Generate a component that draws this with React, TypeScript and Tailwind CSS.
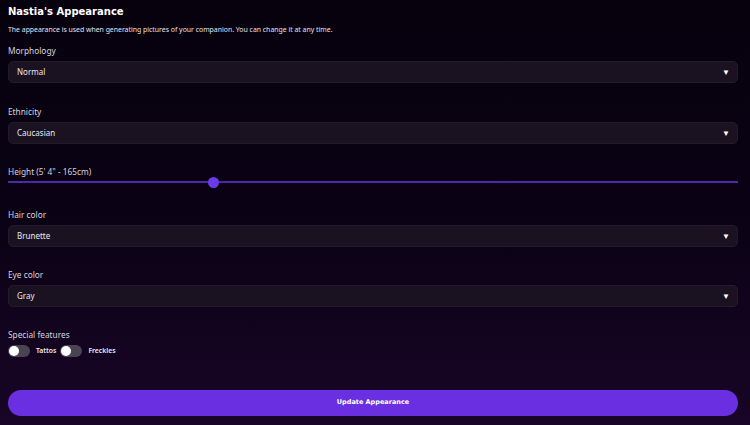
import React, { useState } from "react";

const body = { fontFamily: '"Noto Sans", "Open Sans", sans-serif' };
const display = { fontFamily: '"DejaVu Sans", Inter, sans-serif' };

function Select({ label, value }: { label: string; value: string }) {
  return (
    <div className="flex flex-col">
      <label className="text-[8.3px] text-[#d8d2de] leading-[12px] h-[12px]">{label}</label>
      <div className="mt-[4px] h-[22px] rounded-[5px] bg-[#1a1220] border border-[#241a2c] flex items-center justify-between pl-[8px] pr-[7px]">
        <span className="text-[8px] text-[#ece8f0]">{value}</span>
        <span className="text-[8px] text-white leading-none">▼</span>
      </div>
    </div>
  );
}

function Toggle({ label }: { label: string }) {
  const [on, setOn] = useState(false);
  return (
    <button onClick={() => setOn(!on)} className="flex items-center gap-[6px]">
      <span className={"w-[22px] h-[12px] rounded-full flex items-center px-[1px] " + (on ? "bg-[#6a2fe0] justify-end" : "bg-[#4a4450]")}>
        <span className="w-[10px] h-[10px] rounded-full bg-white" />
      </span>
      <span className="text-[6.8px] font-semibold text-[#ece8f0]">{label}</span>
    </button>
  );
}

export default function App() {
  return (
    <div
      className="w-[750px] h-[425px] overflow-hidden bg-gradient-to-b from-[#07010e] via-[#0a0214] to-[#190527] px-[8px] pt-[4px]"
      style={body}
    >
      <h1 className="text-[10px] font-bold text-white leading-[16px]" style={display}>
        Nastia's Appearance
      </h1>
      <p className="mt-[5px] text-[6.9px] text-[#e6e2ea] leading-[10px]">
        The appearance is used when generating pictures of your companion. You can change it at any time.
      </p>
      <div className="w-[730px] mt-[10px] flex flex-col">
        <Select label="Morphology" value="Normal" />
        <div className="mt-[23px]">
          <Select label="Ethnicity" value="Caucasian" />
        </div>
        <div className="mt-[22px] flex flex-col">
          <label className="text-[8.3px] text-[#d8d2de] leading-[12px]">Height (5' 4" - 165cm)</label>
          <div className="relative h-[8px] flex items-center">
            <div className="w-full h-[2px] bg-[#4a2aa8]" />
            <div className="absolute left-[200px] w-[11px] h-[11px] rounded-full bg-[#6b3bea]" />
          </div>
        </div>
        <div className="mt-[23px]">
          <Select label="Hair color" value="Brunette" />
        </div>
        <div className="mt-[22px]">
          <Select label="Eye color" value="Gray" />
        </div>
        <div className="mt-[22px] flex flex-col">
          <label className="text-[8.3px] text-[#d8d2de] leading-[12px]">Special features</label>
          <div className="mt-[4px] flex items-center gap-[4px]">
            <Toggle label="Tattos" />
            <Toggle label="Freckles" />
          </div>
        </div>
        <button className="mt-[33px] h-[26px] rounded-full bg-[#6a2fe0] text-white text-[6.5px] font-bold" style={display}>
          Update Appearance
        </button>
      </div>
    </div>
  );
}
